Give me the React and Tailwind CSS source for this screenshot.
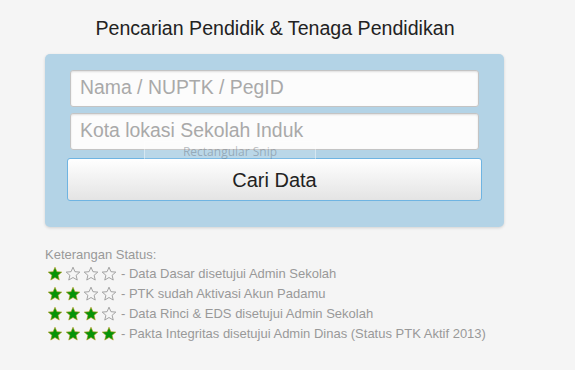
import React from 'react';

const ROWS = [
  { n: 1, text: '- Data Dasar disetujui Admin Sekolah' },
  { n: 2, text: '- PTK sudah Aktivasi Akun Padamu' },
  { n: 3, text: '- Data Rinci & EDS disetujui Admin Sekolah' },
  { n: 4, text: '- Pakta Integritas disetujui Admin Dinas (Status PTK Aktif 2013)' },
];

const STAR = 'M8 1.2l1.95 4.5 4.85.4-3.7 3.2 1.15 4.75L8 11.5l-4.25 2.55L4.9 9.3 1.2 6.1l4.85-.4z';

const Star = ({ filled }) => (
  <svg width="16" height="16" viewBox="0 0 16 16" className="flex-shrink-0">
    {filled ? (
      <path d={STAR} fill="#079307" stroke="#b79a1c" strokeWidth="0.6" strokeLinejoin="round" />
    ) : (
      <path d={STAR} fill="none" stroke="#9a9a9a" strokeWidth="0.9" strokeLinejoin="round" />
    )}
  </svg>
);

export default function App() {
  return (
    <div className="w-[575px] h-[370px] bg-[#f5f5f5] relative overflow-hidden" style={{ fontFamily: '"Liberation Sans", Arial, sans-serif' }}>
      <h1 className="text-center text-[19.6px] text-[#222] pt-[14px] h-[54px] w-[550px]">
        Pencarian Pendidik &amp; Tenaga Pendidikan
      </h1>

      <div className="ml-[45px] w-[459px] h-[173px] bg-[#b3d3e6] rounded-[5px] shadow-[0_1px_3px_rgba(0,0,0,0.15)] pt-[16px] pl-[22px]">
        <div className="flex flex-col gap-[6px]">
          <div className="ml-[3px] w-[409px] h-[37px] bg-[#fcfcfc] border border-[#c4c4c4] rounded-[3px] shadow-[inset_0_1px_2px_rgba(0,0,0,0.12)] flex items-center pl-[9px] pb-[2px] text-[19.4px] text-[#a9a9a9]">
            Nama / NUPTK / PegID
          </div>
          <div className="ml-[3px] w-[409px] h-[37px] bg-[#fcfcfc] border border-[#c4c4c4] rounded-[3px] shadow-[inset_0_1px_2px_rgba(0,0,0,0.12)] flex items-center pl-[9px] pb-[2px] text-[19.4px] text-[#a9a9a9]">
            Kota lokasi Sekolah Induk
          </div>
        </div>
        <div className="mt-[8px] w-[415px] h-[43px] rounded-[3px] border border-[#6fb4e2] bg-gradient-to-b from-white to-[#e4e4e4] flex items-center justify-center text-[20px] text-[#222]">
          Cari Data
        </div>
      </div>

      <div className="ml-[45px] mt-[19px] text-[13px] text-[#999]">
        <div className="h-[18px] leading-[18px]">Keterangan Status:</div>
        {ROWS.map(r => (
          <div key={r.n} className="flex items-center h-[20px]">
            <div className="flex gap-[2px] w-[76px] pl-[2px]">
              {[1, 2, 3, 4].map(i => <Star key={i} filled={i <= r.n} />)}
            </div>
            <span>{r.text}</span>
          </div>
        ))}
      </div>

      <div className="absolute left-[144px] top-[141px] w-[172px] h-[22px] border border-[rgba(255,255,255,0.4)] bg-[rgba(255,255,255,0.1)] rounded-[2px] flex items-center justify-center text-[12px] text-[rgba(90,100,110,0.4)]" style={{ fontFamily: '"Open Sans", sans-serif' }}>
        Rectangular Snip
      </div>
    </div>
  );
}
